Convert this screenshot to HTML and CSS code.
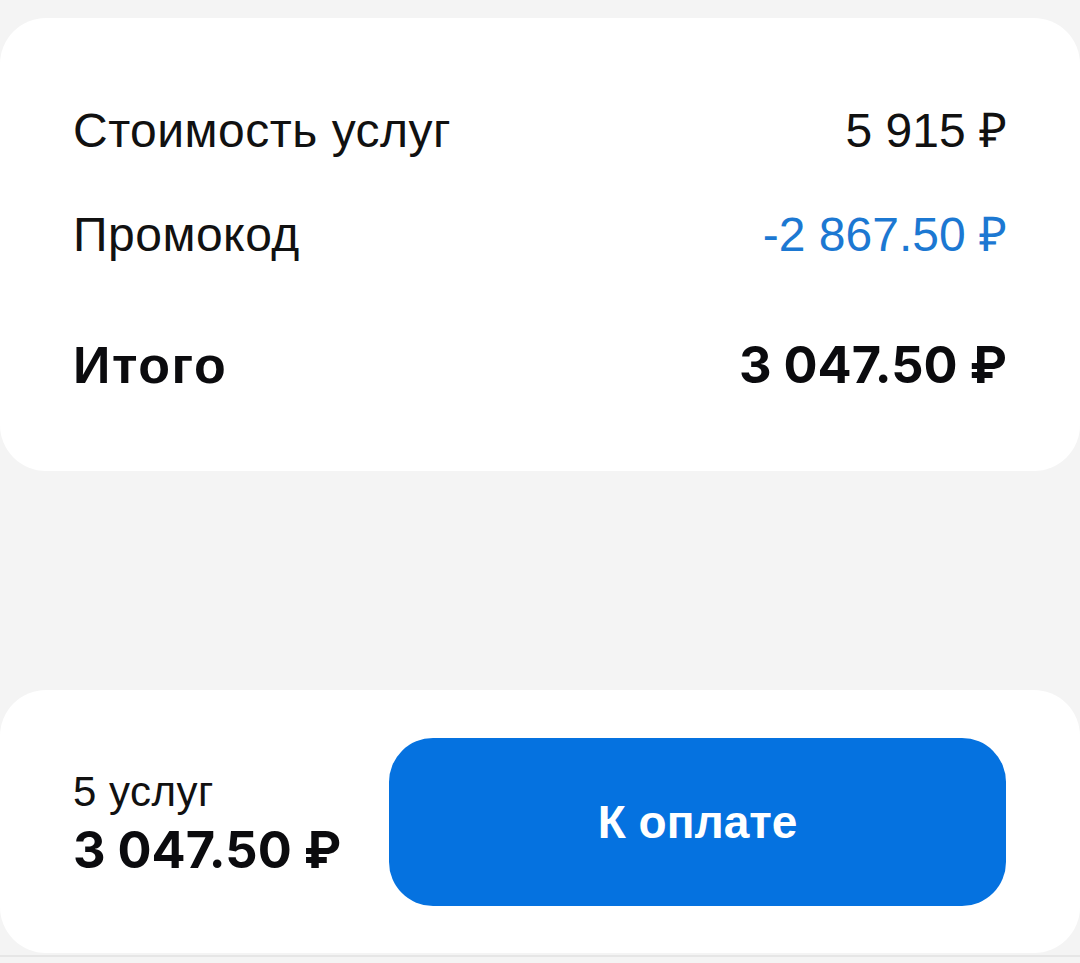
FILE: index.html
```html
<!DOCTYPE html>
<html lang="ru">
<head>
<meta charset="utf-8">
<title>Итого</title>
<link rel="stylesheet" href="styles.css">
</head>
<body>
<div class="page">
  <section class="summary">
    <div class="row row-first">
      <span class="label">Стоимость услуг</span>
      <span class="value">5 915 ₽</span>
    </div>
    <div class="row row-promo">
      <span class="label">Промокод</span>
      <span class="value promo">-2 867.50 ₽</span>
    </div>
    <div class="row row-total">
      <span class="label total-label">Итого</span>
      <span class="value total-value">3 047.50 ₽</span>
    </div>
  </section>
  <section class="checkout">
    <div class="checkout-info">
      <div class="count">5 услуг</div>
      <div class="sum">3 047.50 ₽</div>
    </div>
    <button class="pay">К оплате</button>
  </section>
  <div class="bottom-edge"></div>
</div>
</body>
</html>
```
FILE: styles.css
```css
html, body {
  margin: 0;
  padding: 0;
  background: #f4f4f4;
}
body {
  font-family: "Liberation Sans", Arial, sans-serif;
  color: #111;
  width: 1080px;
  height: 963px;
  overflow: hidden;
}
.page {
  padding-top: 18px;
}
.summary {
  background: #ffffff;
  border-radius: 46px;
  height: 453px;
  box-sizing: border-box;
  padding: 85px 73px 0 73px;
}
.row {
  display: flex;
  justify-content: space-between;
  align-items: baseline;
  font-size: 48px;
  line-height: 56px;
}
.label {
  letter-spacing: 0.5px;
}
.row-promo {
  margin-top: 48px;
}
.row-total {
  margin-top: 72px;
  line-height: 60px;
}
.promo {
  color: #1c78d2;
}
.total-label {
  font-weight: 700;
  font-size: 52px;
  letter-spacing: 1.5px;
  color: #0b0b0e;
}
.total-value,
.sum {
  font-family: Inter, "Liberation Sans", sans-serif;
  font-weight: 700;
  font-size: 50.5px;
  color: #0b0b0e;
}
.checkout {
  margin-top: 219px;
  background: #ffffff;
  border-radius: 46px;
  height: 263px;
  display: flex;
  align-items: center;
  justify-content: space-between;
  padding: 0 74px 0 73px;
  box-sizing: border-box;
}
.checkout-info {
  display: flex;
  flex-direction: column;
  gap: 6px;
  padding-top: 6px;
}
.count {
  font-size: 42px;
  line-height: 44px;
  letter-spacing: 0.5px;
}
.sum {
  line-height: 60px;
}
.pay {
  width: 617px;
  height: 168px;
  border: none;
  border-radius: 44px;
  background: #0572e0;
  color: #ffffff;
  font-family: "Liberation Sans", Arial, sans-serif;
  font-weight: 700;
  font-size: 46px;
  padding: 0;
}
.bottom-edge {
  margin-top: 2px;
  height: 2px;
  background: #e6e6e6;
}
```
